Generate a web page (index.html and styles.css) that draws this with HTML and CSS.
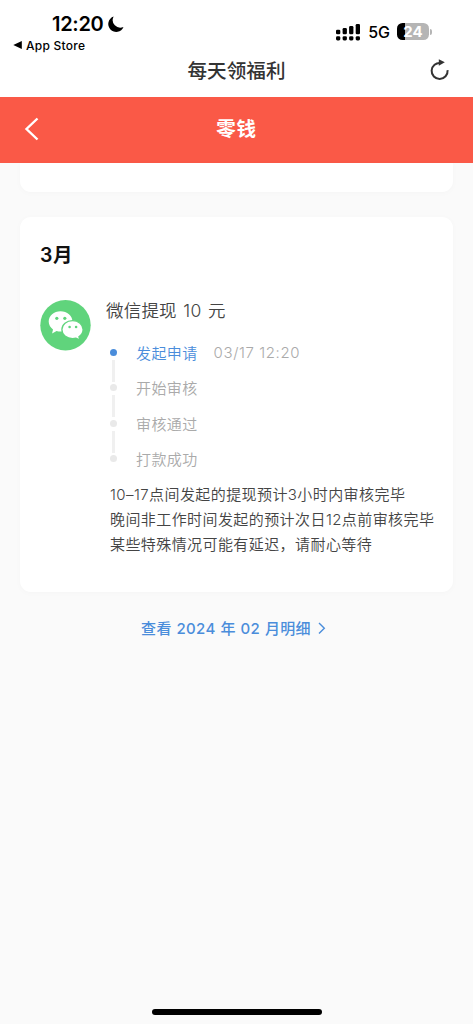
FILE: index.html
```html
<!DOCTYPE html>
<html lang="zh-CN">
<head>
<meta charset="utf-8">
<meta name="viewport" content="width=device-width, initial-scale=1">
<title>零钱</title>
<link rel="stylesheet" href="styles.css">
</head>
<body>
<div class="screen">
  <header class="top">
    <div class="status">
      <div class="status-left">
        <div class="clock"><span class="clock-time">12:20</span>
          <svg class="moon" width="16" height="16" viewBox="0 0 16 16"><path d="M5.6.6A7.9 7.9 0 1 0 15.5 11 7.6 7.6 0 0 1 5.6.6Z" fill="#000"/></svg>
        </div>
        <div class="return"><svg width="9" height="8" viewBox="0 0 9 8"><path d="M.3 4 8.8 0v8Z" fill="#000"/></svg><span>App Store</span></div>
      </div>
      <div class="status-right">
        <svg class="signal" width="25" height="17" viewBox="0 0 25 17">
          <g fill="#000"><rect x="0" y="5.7" width="4.3" height="4.6" rx="1.3"/><rect x="6.6" y="4" width="4.3" height="6.3" rx="1.3"/><rect x="13.1" y="2" width="4.3" height="8.3" rx="1.3"/><rect x="19.7" y="0" width="4.3" height="10.3" rx="1.3"/><rect x="0" y="12.2" width="4.3" height="4.3" rx="1.4"/><rect x="6.6" y="12.2" width="4.3" height="4.3" rx="1.4"/><rect x="13.1" y="12.2" width="4.3" height="4.3" rx="1.4"/><rect x="19.7" y="12.2" width="4.3" height="4.3" rx="1.4"/></g>
        </svg>
        <span class="network">5G</span>
        <span class="battery">24</span><span class="battery-cap"></span>
      </div>
    </div>
    <div class="app-title">
      <h1>每天领福利</h1>
      <svg class="refresh" width="20" height="22" viewBox="0 0 20 22"><path d="M10.7 4A8 8 0 1 0 17.6 11.2" fill="none" stroke="#333" stroke-width="2"/><path d="M8.8.2 14.8 3.3 8.8 6.8Z" fill="#333"/></svg>
    </div>
  </header>
  <nav class="nav">
    <svg class="back" width="15" height="24" viewBox="0 0 15 24"><path d="M13.5 1.5 2.5 12 13.5 22.5" fill="none" stroke="#fff" stroke-width="2.4"/></svg>
    <h2>零钱</h2>
  </nav>
  <main class="content">
    <section class="card card-previous"></section>
    <section class="card card-month">
      <h3>3月</h3>
      <div class="record">
        <svg class="wechat" width="51" height="51" viewBox="0 0 51 51">
          <circle cx="25.5" cy="25.2" r="25.2" fill="#60d47c"/>
          <path d="M20.5 11.3c-6.6 0-11.8 4.5-11.8 10.2 0 3.3 1.7 6 4.3 7.9L12.1 33.4l4.5-2.4c1.2.4 2.5.6 3.9.6 6.6 0 12-4.4 12-10.1s-5.4-10.2-12-10.2Z" fill="#fff"/>
          <path d="M32.6 20.6c-6 0-10.7 3.9-10.7 9s4.7 9 10.7 9c1.2 0 2.3-.2 3.4-.5l3.9 1.9-1-3.3c2.5-1.6 4.2-4.2 4.2-7.1 0-5.1-4.7-9-10.5-9Z" fill="#fff" stroke="#60d47c" stroke-width="1.3"/>
          <g fill="#60d47c"><circle cx="16.8" cy="18.3" r="1.6"/><circle cx="24.8" cy="18.3" r="1.6"/><circle cx="29.6" cy="27" r="1.3"/><circle cx="36.1" cy="27" r="1.3"/></g>
        </svg>
        <div class="detail">
          <div class="record-title">微信提现 10 元</div>
          <ol class="steps">
            <li class="step active"><span class="dot"></span><span>发起申请</span><time>03/17 12:20</time></li>
            <li class="step"><span class="dot"></span><span>开始审核</span></li>
            <li class="step"><span class="dot"></span><span>审核通过</span></li>
            <li class="step"><span class="dot"></span><span>打款成功</span></li>
          </ol>
          <div class="notes">
            <p>10–17点间发起的提现预计3小时内审核完毕</p>
            <p>晚间非工作时间发起的预计次日12点前审核完毕</p>
            <p>某些特殊情况可能有延迟，请耐心等待</p>
          </div>
        </div>
      </div>
    </section>
    <a class="more"><span>查看 2024 年 02 月明细</span><svg width="8" height="12" viewBox="0 0 8 12"><path d="M1 1 6.3 6.2 1 11.4" fill="none" stroke="#4a8ddb" stroke-width="1.4"/></svg></a>
  </main>
  <footer class="home"><span class="home-bar"></span></footer>
</div>
</body>
</html>
```
FILE: styles.css
```css
* { box-sizing: border-box; }
body { margin: 0; }
h1, h2, h3, p, ol { margin: 0; padding: 0; }
svg { display: block; flex: none; }
.screen {
  display: flex;
  flex-direction: column;
  width: 473px;
  height: 1024px;
  overflow: hidden;
  background: #fafafa;
  color: #444;
  font-family: Inter, "Noto Sans CJK SC", sans-serif;
  white-space: nowrap;
}
.top { height: 97px; background: #fff; flex: none; }
.status { display: flex; justify-content: space-between; height: 54px; color: #000; }
.status-left { padding: 12px 0 0 13px; }
.clock { display: flex; align-items: center; gap: 5px; height: 24px; padding-left: 39px; }
.clock-time { font-size: 20px; font-weight: 600; letter-spacing: -0.3px; }
.return { display: flex; align-items: center; gap: 4px; height: 18px; font-size: 12px; font-weight: 500; letter-spacing: 0.25px; }
.status-right { display: flex; align-items: center; height: 17px; margin: 23px 41px 0 0; }
.signal { margin-top: 1px; }
.network { margin-left: 7px; padding-top: 2px; font-size: 16px; font-weight: 500; line-height: 17px; }
.battery {
  width: 32px;
  height: 17px;
  margin-left: 7px;
  border-radius: 5.5px;
  background: linear-gradient(90deg, #000 8px, #b5b5b5 8px);
  color: #fff;
  font-size: 15px;
  font-weight: 700;
  line-height: 17px;
  text-align: center;
}
.battery-cap { width: 2px; height: 6px; margin-left: 1px; border-radius: 0 2px 2px 0; background: #b5b5b5; }
.app-title { display: grid; grid-template-columns: 60px 1fr 60px; align-items: center; height: 34px; }
.app-title h1 { grid-column: 2; text-align: center; font-size: 19.6px; font-weight: 500; line-height: 34px; color: #333; }
.refresh { margin-left: 17px; margin-top: -3px; }
.nav {
  display: grid;
  grid-template-columns: 60px 1fr 60px;
  align-items: center;
  height: 66px;
  flex: none;
  background: #fa5947;
  color: #fff;
}
.back { margin-left: 24px; margin-top: -2px; }
.nav h2 { font-size: 19.5px; font-weight: 600; letter-spacing: 0.8px; line-height: 30px; text-align: center; margin-top: -2px; }
.content { display: flex; flex: 1; flex-direction: column; padding: 0 20px; }
.card { background: #fff; box-shadow: 0 1px 6px rgba(0, 0, 0, 0.025); }
.card-previous { height: 29px; border-radius: 0 0 11px 11px; }
.card-month { height: 375px; margin-top: 25px; padding: 23px 0 0 20px; border-radius: 11px; }
.card-month h3 { font-size: 19.5px; font-weight: 600; letter-spacing: 0.5px; line-height: 30px; color: #111; }
.record { display: flex; gap: 15px; margin-top: 30px; }
.detail { flex: 1; }
.record-title { height: 21px; font-size: 17.5px; letter-spacing: 0.2px; line-height: 21px; word-spacing: 1.4px; font-weight: 350; }
.steps { display: flex; flex-direction: column; gap: 14.3px; margin-top: 21px; list-style: none; }
.step { position: relative; display: flex; align-items: center; height: 21px; padding-left: 4px; color: #aaa; font-size: 15px; font-weight: 350; letter-spacing: 0.4px; }
.dot { width: 7px; height: 7px; margin-right: 19px; border-radius: 50%; background: #e9e9e9; }
.step.active { color: #4a8ddb; }
.active .dot { background: #4a8ddb; }
.step time { margin-left: 16px; color: #aaa; letter-spacing: 0.6px; }
.step:not(:last-child)::after { content: ""; position: absolute; left: 6px; top: 18px; width: 3px; height: 22px; background: #f0f0f0; }
.notes { margin-top: 13px; padding-left: 4px; font-size: 15px; font-weight: 350; letter-spacing: 0.42px; line-height: 25.3px; }
.more { display: flex; align-items: center; align-self: center; gap: 7px; height: 24px; margin: 23px 6px 0 0; color: #4a8ddb; font-size: 15px; font-weight: 500; letter-spacing: 0.35px; word-spacing: 0.4px; }
.more svg { margin-top: 2px; }
.home { display: flex; justify-content: center; height: 15px; }
.home-bar { width: 170px; height: 6px; border-radius: 3px; background: #000; }
```
